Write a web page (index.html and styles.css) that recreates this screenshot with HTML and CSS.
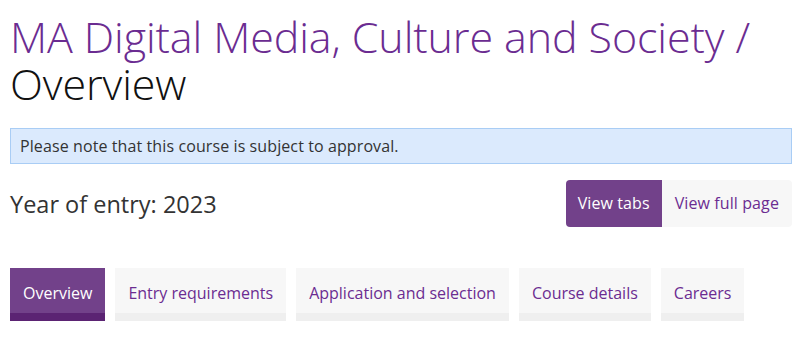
FILE: index.html
```html
<!DOCTYPE html>
<html lang="en">
<head>
    <meta charset="UTF-8">
    <meta name="viewport" content="width=device-width, initial-scale=1.0">
    <title>MA Digital Media, Culture and Society - Overview</title>
    <link rel="stylesheet" href="styles.css">
</head>
<body>
    <div class="page">
        <h1 class="course-title">
            <span class="course-name">MA Digital Media, Culture and Society /</span>
            <span class="section-name">Overview</span>
        </h1>

        <div class="notice">Please note that this course is subject to approval.</div>

        <div class="entry-row">
            <p class="entry-year">Year of entry: 2023</p>
            <div class="view-toggle">
                <a href="#" class="toggle-btn active">View tabs</a>
                <a href="#" class="toggle-btn">View full page</a>
            </div>
        </div>

        <!-- Course section tabs -->
        <nav class="tabs">
            <a href="#" class="tab active">Overview</a>
            <a href="#" class="tab">Entry requirements</a>
            <a href="#" class="tab">Application and selection</a>
            <a href="#" class="tab">Course details</a>
            <a href="#" class="tab">Careers</a>
        </nav>
    </div>
</body>
</html>
```

FILE: styles.css
```css
body {
    font-family: "Open Sans", Arial, sans-serif;
    margin: 0;
    padding: 0;
    background-color: #fff;
    color: #333;
    letter-spacing: 0.1px;
}

.page {
    padding: 13px 4px 0 10px;
}

.course-title {
    margin: 0;
    font-size: 43px;
    font-weight: 300;
    line-height: 47px;
    letter-spacing: -0.1px;
}

.course-name {
    display: block;
    color: #6b2c91;
}

.section-name {
    display: block;
    color: #111;
}

.notice {
    margin-top: 21px;
    padding: 5px 9px;
    font-size: 16px;
    line-height: 24px;
    background-color: #dbeafd;
    border: 1px solid #a9cdf5;
    color: #333;
}

.entry-row {
    display: flex;
    justify-content: space-between;
    align-items: center;
    margin-top: 16px;
}

.entry-year {
    margin: 0;
    font-size: 23.5px;
    line-height: 32px;
    letter-spacing: 0;
    color: #333;
}

.view-toggle {
    display: flex;
    border-radius: 4px;
    overflow: hidden;
}

.toggle-btn {
    padding: 11px 13px 12px;
    font-size: 16px;
    line-height: 24px;
    text-decoration: none;
    color: #6b2c91;
    background-color: #f7f7f7;
}

.toggle-btn.active {
    padding: 11px 12px 12px;
    background-color: #72418a;
    color: #fff;
}

.tabs {
    display: flex;
    gap: 10px;
    margin-top: 41px;
}

.tab {
    padding: 13px 13px 8px;
    font-size: 16px;
    line-height: 24px;
    letter-spacing: 0;
    text-decoration: none;
    color: #6b2c91;
    background-color: #f7f7f7;
    border-bottom: 8px solid #efefef;
}

.tab.active {
    background-color: #72418a;
    border-bottom-color: #5b2373;
    color: #fff;
}
```
